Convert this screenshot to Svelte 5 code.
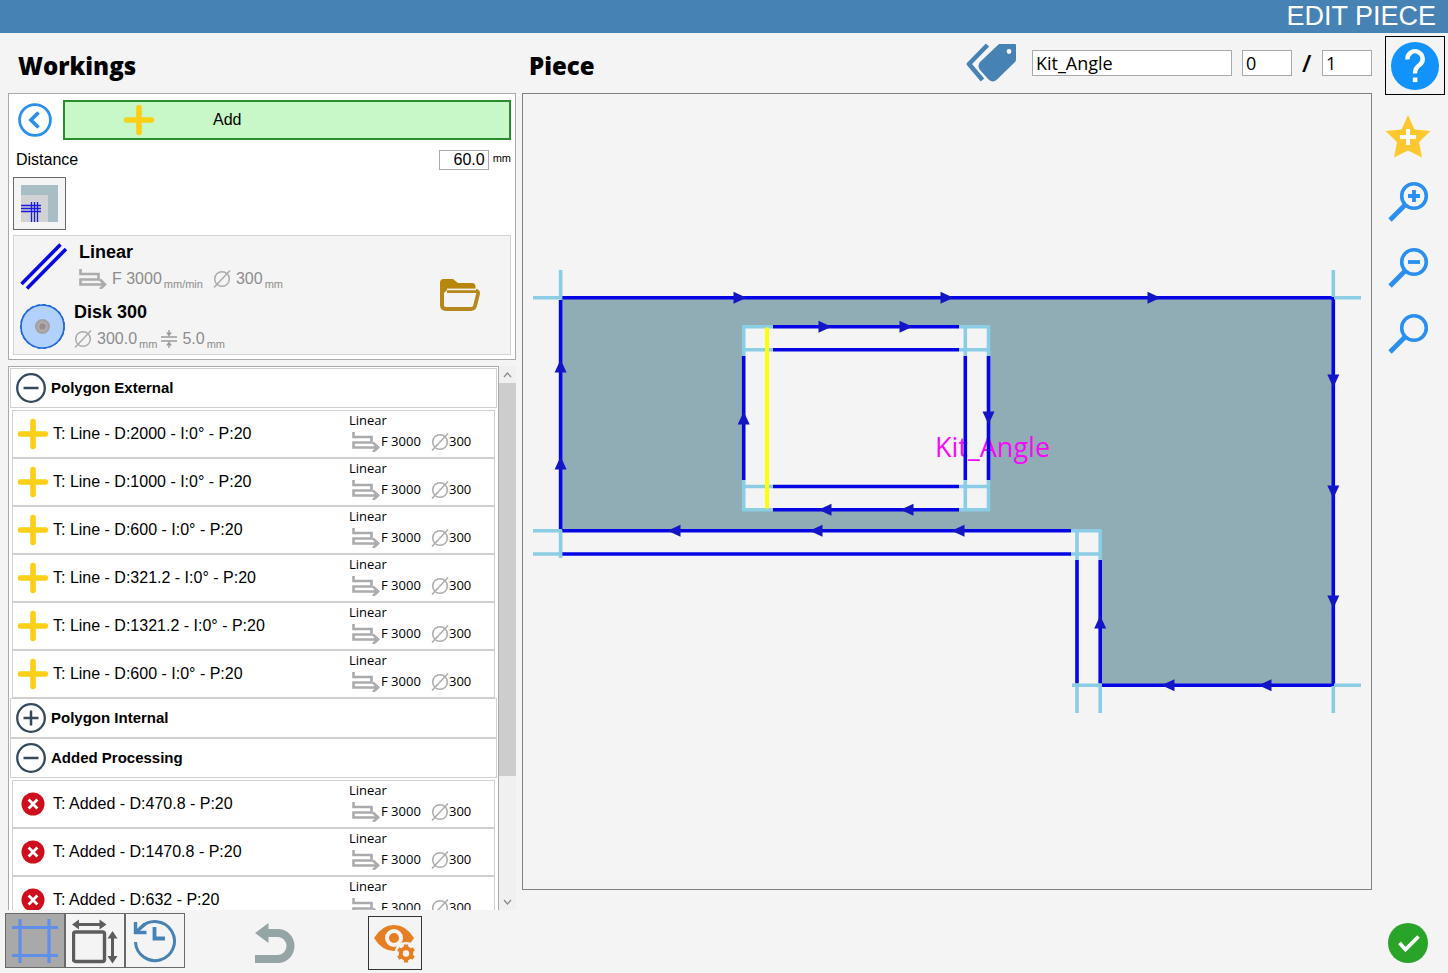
<script>
  let pieceName = $state("Kit_Angle");
  let pieceIndex = $state("0");
  let pieceTotal = $state("1");
  let distance = $state("60.0");
  let view = $state("cuts");

  let groups = $state([
    {
      title: "Polygon External",
      open: true,
      kind: "line",
      items: [
        "T: Line - D:2000 - I:0° - P:20",
        "T: Line - D:1000 - I:0° - P:20",
        "T: Line - D:600 - I:0° - P:20",
        "T: Line - D:321.2 - I:0° - P:20",
        "T: Line - D:1321.2 - I:0° - P:20",
        "T: Line - D:600 - I:0° - P:20",
      ],
    },
    { title: "Polygon Internal", open: false, kind: "line", items: [] },
    {
      title: "Added Processing",
      open: true,
      kind: "added",
      items: [
        "T: Added - D:470.8 - P:20",
        "T: Added - D:1470.8 - P:20",
        "T: Added - D:632 - P:20",
      ],
    },
  ]);

  // share of the list that fits in the viewport
  const thumbHeight = 77;

  // blade overrun past the corners
  const overruns = [
    "M533 297.7H562M560.6 270V299.5",
    "M1333.3 270V297M1334 297.7H1361",
    "M1333.3 686V713M1334 685.2H1361",
    "M533 530.8H561M533 554H561M560.6 530V558",
    "M1071 530.8H1101.5M1071 554H1101M1077 531V560M1100.2 530V560",
    "M1072 685.2H1102M1077 685V713M1100.2 685V713",
    "M742 326.7H773M743.7 326V356M743 349.7H773",
    "M742 509.7H773M743.7 480V511M743 486.5H773",
    "M959 326.7H990M988.5 326V356M965.3 327V356M959 349.7H989",
    "M959 509.7H990M988.5 480V511M965.3 480V510M959 486.5H989",
  ];

  const cuts = [
    "M562 297.7H1334",
    "M1333.3 298V685",
    "M1102 685.2H1334",
    "M560.6 300V529",
    "M562 530.8H1071M562 554H1071",
    "M1077 560V683.5M1100.2 560V683.5",
    "M773 326.7H959M773 349.7H959",
    "M773 486.5H959M773 509.7H959",
    "M743.7 356V480",
    "M965.3 356V480M988.5 356V480",
  ];

  const arrows = [
    { x: 740, y: 297.7, angle: 0 },
    { x: 947, y: 297.7, angle: 0 },
    { x: 1154, y: 297.7, angle: 0 },
    { x: 825, y: 326.7, angle: 0 },
    { x: 906, y: 326.7, angle: 0 },
    { x: 1333.3, y: 381, angle: 90 },
    { x: 1333.3, y: 492, angle: 90 },
    { x: 1333.3, y: 602, angle: 90 },
    { x: 988.5, y: 418, angle: 90 },
    { x: 1265, y: 685.2, angle: 180 },
    { x: 1168, y: 685.2, angle: 180 },
    { x: 958, y: 530.8, angle: 180 },
    { x: 816, y: 530.8, angle: 180 },
    { x: 674, y: 530.8, angle: 180 },
    { x: 907, y: 509.7, angle: 180 },
    { x: 825, y: 509.7, angle: 180 },
    { x: 560.6, y: 463, angle: 270 },
    { x: 560.6, y: 366, angle: 270 },
    { x: 743.7, y: 418, angle: 270 },
    { x: 1100.2, y: 622, angle: 270 },
  ];
</script>

{#snippet feedIcon()}
  <svg class="feed-icon" viewBox="0 0 28 20" aria-hidden="true">
    <path d="M1.5 0V5H19.5V10.5H1.5V15.5H26M21 10.5L26 15.5L21 20" fill="none" stroke="#ababab" stroke-width="2.6" />
  </svg>
{/snippet}

{#snippet diameterIcon()}
  <svg class="diameter-icon" viewBox="0 0 18 18" aria-hidden="true">
    <circle cx="9" cy="9" r="7.3" fill="none" stroke="#ababab" stroke-width="1.5" />
    <path d="M1 17.5L17 0.5" stroke="#ababab" stroke-width="1.5" />
  </svg>
{/snippet}

{#snippet plusIcon()}
  <svg class="plus-icon" viewBox="0 0 32 32" aria-hidden="true">
    <path d="M16 3.5V28.5M3.5 16H28.5" stroke="#fbd016" stroke-width="5.6" stroke-linecap="round" />
  </svg>
{/snippet}

<div class="page">
  <header class="titlebar">EDIT PIECE</header>

  <main class="workspace">
    <section class="workings">
      <h2 class="heading">Workings</h2>

      <div class="panel">
        <div class="add-row">
          <button type="button" class="plain" aria-label="Back">
            <svg width="34" height="34" viewBox="0 0 34 34">
              <circle cx="17" cy="17" r="15.4" fill="none" stroke="#2b8fef" stroke-width="2.8" />
              <path d="M20.5 9.5L13 17L20.5 24.5" fill="none" stroke="#2b8fef" stroke-width="3.8" />
            </svg>
          </button>
          <button type="button" class="add-button">
            {@render plusIcon()}
            <span>Add</span>
          </button>
        </div>

        <div class="distance-row">
          <label for="distance">Distance</label>
          <input id="distance" class="distance-input" type="text" bind:value={distance} />
          <span class="unit">mm</span>
        </div>

        <button type="button" class="corner-button" aria-label="Corner type">
          <svg width="37" height="37" viewBox="0 0 37 37">
            <rect width="37" height="37" fill="#a9bec4" />
            <rect y="10" width="27" height="27" fill="#d0d2d3" />
            <path d="M0 20.5H20M0 23.5H20M0 26.5H20M10.5 17V37M13.5 17V37M16.5 17V37" stroke="#1a1ae0" stroke-width="1.3" />
          </svg>
        </button>

        <div class="tool-card">
          <div class="tools">
            <div class="tool">
              <svg width="47" height="48" viewBox="0 0 47 48" aria-hidden="true">
                <path d="M1.5 41L40.5 1.5M7 45.5L46 6" stroke="#0808e6" stroke-width="3.6" />
              </svg>
              <div class="tool-info tool-info--wide">
                <strong>Linear</strong>
                <div class="params">
                  {@render feedIcon()}
                  <span class="value">F 3000</span><small>mm/min</small>
                  {@render diameterIcon()}
                  <span class="value">300</span><small>mm</small>
                </div>
              </div>
            </div>
            <div class="tool tool--disk">
              <svg width="46" height="46" viewBox="0 0 46 46" aria-hidden="true">
                <circle cx="22.5" cy="22.5" r="21.5" fill="#b3d1fd" stroke="#2069dc" stroke-width="1.6" />
                <circle cx="22.5" cy="22.5" r="21.9" fill="none" stroke="#2069dc" stroke-width="1.2" stroke-dasharray="4 2" />
                <circle cx="22.5" cy="22.5" r="6.3" fill="#b5aead" stroke="#a2a2a2" stroke-width="2.6" />
                <circle cx="22.5" cy="22.5" r="3.2" fill="#958f8f" />
              </svg>
              <div class="tool-info">
                <strong>Disk 300</strong>
                <div class="params">
                  {@render diameterIcon()}
                  <span class="value">300.0</span><small>mm</small>
                  <svg width="16" height="18" viewBox="0 0 16 18" aria-hidden="true">
                    <path d="M0 7H16M0 11H16M8 0V5M8 18V13" stroke="#999" stroke-width="1.3" />
                    <path d="M5 2.5H11L8 6.5ZM5 15.5H11L8 11.5Z" fill="#999" />
                  </svg>
                  <span class="value">5.0</span><small>mm</small>
                </div>
              </div>
            </div>
          </div>
          <button type="button" class="plain" aria-label="Open tool">
            <svg width="42" height="34" viewBox="0 0 42 34">
              <path d="M1 5Q1 1 4.5 1H14L19 5H33Q36.5 5 36.5 8.5V11H9L5 15V28H1Z" fill="#b8860b" />
              <path d="M3 8V27Q3 31 7 31H32Q35 31 36 28L39 16Q39.5 13 37 13H8" fill="none" stroke="#b5871c" stroke-width="3.8" stroke-linejoin="round" />
              <path d="M8 11.4H37" stroke="#f4f4f4" stroke-width="1.6" />
            </svg>
          </button>
        </div>
      </div>

      <div class="list-box">
        <div class="list">
          {#each groups as group (group.title)}
            <button type="button" class="group-head" aria-expanded={group.open} onclick={() => (group.open = !group.open)}>
              <svg width="30" height="30" viewBox="0 0 30 30" aria-hidden="true">
                <circle cx="15" cy="15" r="13.8" fill="none" stroke="#34495e" stroke-width="2.3" />
                <path d={group.open ? "M7.5 15H22.5" : "M7.5 15H22.5M15 7.5V22.5"} stroke="#34495e" stroke-width="2.5" />
              </svg>
              <span>{group.title}</span>
            </button>
            {#if group.open}
              <ul class="items">
                {#each group.items as item}
                  <li class="item">
                    {#if group.kind === "line"}
                      {@render plusIcon()}
                    {:else}
                      <svg class="plus-icon" viewBox="0 0 32 32" aria-hidden="true">
                        <circle cx="16" cy="16" r="11.5" fill="#d00d1c" />
                        <path d="M11.6 11.6L20.4 20.4M20.4 11.6L11.6 20.4" stroke="#fff" stroke-width="2.8" />
                      </svg>
                    {/if}
                    <span class="item-name">{item}</span>
                    <div class="item-tool">
                      <span>Linear</span>
                      <div class="item-params">
                        {@render feedIcon()}
                        <span class="item-feed">F 3000</span>
                        {@render diameterIcon()}
                        <span>300</span>
                      </div>
                    </div>
                  </li>
                {/each}
              </ul>
            {/if}
          {/each}
        </div>
        <div class="scrollbar">
          <button type="button" class="scroll-arrow" aria-label="Scroll up">
            <svg width="9" height="6" viewBox="0 0 9 6"><path d="M1 5L4.5 1L8 5" fill="none" stroke="#888" stroke-width="1.2" /></svg>
          </button>
          <div class="scroll-track">
            <div class="scroll-thumb" style="height: {thumbHeight}%"></div>
          </div>
          <button type="button" class="scroll-arrow" aria-label="Scroll down">
            <svg width="9" height="6" viewBox="0 0 9 6"><path d="M1 1L4.5 5L8 1" fill="none" stroke="#888" stroke-width="1.2" /></svg>
          </button>
        </div>
      </div>

      <footer class="toolbar">
        <div class="views">
          <button type="button" class="view" class:view--active={view === "cuts"} aria-label="Cuts" onclick={() => (view = "cuts")}>
            <svg width="46" height="46" viewBox="0 0 46 46">
              <path d="M0 9.5H46M0 37.5H46M8 1V45M37 1V45" stroke="#5f8fe8" stroke-width="3.2" />
            </svg>
          </button>
          <button type="button" class="view" class:view--active={view === "size"} aria-label="Size" onclick={() => (view = "size")}>
            <svg width="46" height="46" viewBox="0 0 46 46">
              <rect x="1.5" y="14" width="31" height="29.5" rx="2" fill="none" stroke="#5c5c5c" stroke-width="3.4" />
              <path d="M4 6.5H31M40.5 18V41" stroke="#5c5c5c" stroke-width="3" />
              <path d="M0 6.5L7 1.5V11.5ZM34.5 6.5L27.5 1.5V11.5ZM40.5 13L35.5 20.5H45.5ZM40.5 45.5L35.5 38H45.5Z" fill="#5c5c5c" />
            </svg>
          </button>
          <button type="button" class="view" class:view--active={view === "history"} aria-label="History" onclick={() => (view = "history")}>
            <svg width="46" height="46" viewBox="0 0 46 46">
              <path d="M3.5 24A19.5 19.5 0 1 0 9 9.5" fill="none" stroke="#4682b4" stroke-width="3" />
              <path d="M3.5 4V14.5H14.5" fill="none" stroke="#4682b4" stroke-width="3.4" />
              <path d="M4 14L13 6" stroke="#4682b4" stroke-width="3.4" />
              <path d="M22.5 9V20.5H33" fill="none" stroke="#4682b4" stroke-width="3.8" />
            </svg>
          </button>
        </div>
        <button type="button" class="plain" aria-label="Undo">
          <svg width="43" height="42" viewBox="0 0 43 42">
            <path d="M0 11L13.5 1V7H23A16.500 17 0 0 1 23 41H0V33H23A8.500 9 0 0 0 23 15H13.5V21Z" fill="#95a5a6" />
          </svg>
        </button>
        <button type="button" class="preview-button" aria-label="Preview settings">
          <svg width="42" height="40" viewBox="0 0 42 40">
            <path d="M0 15Q8 2 20 2T40 15Q37 20 34 22L22 28H20Q8 28 0 15Z" fill="#e67e22" />
            <circle cx="20" cy="15" r="7" fill="none" stroke="#f4f4f4" stroke-width="4" />
            <circle cx="32" cy="30.5" r="11.5" fill="#f4f4f4" />
            <circle cx="32" cy="30.5" r="5.2" fill="none" stroke="#e67e22" stroke-width="4" />
            <path
              d="M32 21.500V39.5M24.2 26L39.8 35M24.2 35L39.8 26"
              stroke="#e67e22"
              stroke-width="4.2"
            />
            <circle cx="32" cy="30.5" r="3.2" fill="#f4f4f4" />
          </svg>
        </button>
      </footer>
    </section>

    <section class="piece">
      <div class="piece-head">
        <h2 class="heading">Piece</h2>
        <div class="piece-fields">
          <svg width="52" height="42" viewBox="0 0 52 42" aria-hidden="true">
            <path d="M21.5 3L3 22L16.5 38" fill="none" stroke="#4682b4" stroke-width="4.6" stroke-linejoin="round" />
            <path d="M33 2H49Q50 2 50 3V17.5Q50 19 49 20L31 37.5Q27 41 23 38L14 28Q11 24 14 20Z" fill="#4682b4" />
            <circle cx="43" cy="9.5" r="2.4" fill="#fff" />
          </svg>
          <input class="name-input" type="text" aria-label="Piece name" bind:value={pieceName} />
          <input class="count-input" type="text" aria-label="Piece number" bind:value={pieceIndex} />
          <span class="slash">/</span>
          <input class="count-input" type="text" aria-label="Piece total" bind:value={pieceTotal} />
        </div>
      </div>

      <div class="canvas">
        <svg viewBox="523 94 848 795">
          <path
            d="M560.6 297.7H1333.3V685.2H1100.2V530.8H560.6ZM743.7 326.7V509.7H988.5V326.7Z"
            fill="#90acb5"
            fill-rule="evenodd"
          />
          <text class="piece-label" x="935" y="457">Kit_Angle</text>
          {#each cuts as d}
            <path {d} stroke="#0606e4" stroke-width="3.6" />
          {/each}
          {#each overruns as d}
            <path {d} stroke="#8acde5" stroke-width="3.6" />
          {/each}
          <path d="M767 327.5V508.5" stroke="#ffff00" stroke-width="4" />
          {#each arrows as arrow}
            <path d="M-6.5 -6V6L6.5 0Z" fill="#1515c8" transform="translate({arrow.x} {arrow.y}) rotate({arrow.angle})" />
          {/each}
        </svg>
      </div>
    </section>

    <aside class="sidebar">
      <button type="button" class="help-button" aria-label="Help">
        <svg width="48" height="48" viewBox="0 0 48 48">
          <circle cx="24" cy="24" r="24" fill="#1193fb" />
          <path d="M16.5 17.5A7.600 7.600 0 1 1 28.5 23Q24 26 24 31.5" fill="none" stroke="#fff" stroke-width="4.4" />
          <rect x="21.800" y="35.5" width="4.6" height="4.6" fill="#fff" />
        </svg>
      </button>
      <button type="button" class="plain" aria-label="Add to favourites">
        <svg width="46" height="46" viewBox="0 0 46 46">
          <path d="M23 0L29.5 14.5L45.5 16L34 27L37 42.5L23 35.5L9 42.5L12 27L0.5 16L16.5 14.5Z" fill="#fdc82f" />
          <path d="M23 14V30M15 22H31" stroke="#fff" stroke-width="4" />
        </svg>
      </button>
      {#each ["in", "out", "fit"] as mode}
        <button type="button" class="plain" aria-label="Zoom {mode}">
          <svg width="46" height="46" viewBox="0 0 46 46">
            <circle cx="29" cy="15" r="12.3" fill="none" stroke="#2b8fef" stroke-width="3.6" />
            <path d="M20 24L5 39" stroke="#2b8fef" stroke-width="4.8" />
            {#if mode !== "fit"}
              <path d={mode === "in" ? "M23 15H35M29 9V21" : "M23 15H35"} stroke="#2b8fef" stroke-width="3.8" />
            {/if}
          </svg>
        </button>
      {/each}
      <button type="button" class="plain confirm" aria-label="Confirm">
        <svg width="46" height="46" viewBox="0 0 46 46">
          <circle cx="23" cy="23" r="20" fill="#28a428" />
          <path d="M14.5 23L20.5 29.5L33.5 16.5" fill="none" stroke="#fff" stroke-width="3.8" />
        </svg>
      </button>
    </aside>
  </main>
</div>

<style>
  :global(body) {
    background: #f4f4f4;
  }

  .page {
    display: flex;
    flex-direction: column;
    height: 100vh;
    background: #f4f4f4;
    color: #000;
    font-family: "Liberation Sans", Arial, sans-serif;
    font-size: 16px;
    line-height: 20px;
  }

  .page * {
    box-sizing: border-box;
  }

  button {
    margin: 0;
    padding: 0;
    color: inherit;
    font: inherit;
    cursor: pointer;
  }

  svg {
    display: block;
    flex: none;
  }

  .plain {
    display: block;
    background: none;
    border: none;
  }

  .titlebar {
    flex: none;
    padding-right: 12px;
    background: #4682b4;
    color: #fff;
    font-size: 27px;
    line-height: 33px;
    text-align: right;
  }

  .workspace {
    flex: 1;
    min-height: 0;
    display: grid;
    grid-template-columns: 516px minmax(0, 1fr) 63px;
    grid-template-rows: minmax(0, 1fr);
  }

  .heading {
    height: 60px;
    margin: 0;
    padding-top: 3px;
    font-family: "Open Sans", "Noto Sans", sans-serif;
    font-size: 24px;
    font-weight: 800;
    line-height: 60px;
  }

  .workings {
    display: flex;
    flex-direction: column;
    min-height: 0;
  }

  .workings .heading {
    padding-left: 18px;
  }

  .panel {
    margin-left: 8px;
    padding: 6px 4px 4px;
    background: #fff;
    border: 1px solid #a9a9a9;
  }

  .add-row {
    display: flex;
    align-items: center;
    gap: 11px;
    padding-left: 5px;
  }

  .add-button {
    flex: 1;
    display: flex;
    align-items: center;
    gap: 58px;
    height: 40px;
    padding-left: 58px;
    background: #c8f7c8;
    border: 2px solid #2a8c2a;
  }

  .plus-icon {
    width: 32px;
    height: 32px;
  }

  .distance-row {
    display: flex;
    align-items: center;
    height: 37px;
    padding: 3px 0 0 3px;
  }

  .distance-input {
    width: 50px;
    height: 20px;
    margin: 0 4px 0 auto;
    padding: 0 3px;
    border: 1px solid #a9a9a9;
    font: inherit;
    text-align: right;
  }

  .unit {
    padding-bottom: 4px;
    font-size: 11px;
  }

  .corner-button {
    display: flex;
    align-items: center;
    justify-content: center;
    width: 53px;
    height: 53px;
    background: #f4f4f4;
    border: 1px solid #696969;
  }

  .tool-card {
    display: flex;
    align-items: center;
    justify-content: space-between;
    height: 120px;
    margin-top: 5px;
    padding: 0 29px 0 6px;
    background: #f4f4f4;
    border: 1px solid #d3d3d3;
  }

  .tool {
    display: flex;
    align-items: center;
    gap: 8px;
    height: 59px;
    padding-top: 2px;
  }

  .tool--disk {
    padding-top: 4px;
  }

  .tool-info--wide {
    padding-left: 4px;
  }

  .tool-info strong {
    display: block;
    font-size: 18px;
    line-height: 24px;
  }

  .params {
    display: flex;
    align-items: center;
    height: 30px;
    color: #8c8c8c;
  }

  .params small {
    align-self: flex-end;
    margin: 0 10px 0 2px;
    font-size: 11px;
  }

  .tool--disk small {
    margin-right: 4px;
  }

  .value {
    margin-left: 5px;
  }

  .feed-icon {
    width: 28px;
    height: 20px;
  }

  .diameter-icon {
    width: 18px;
    height: 18px;
  }

  .list-box {
    flex: 1;
    min-height: 0;
    display: flex;
    margin: 6px 0 0 8px;
  }

  .list {
    flex: 1;
    padding: 1px;
    background: #fff;
    border: 1px solid #a9a9a9;
    border-bottom: none;
    overflow: hidden;
  }

  .group-head {
    display: flex;
    align-items: center;
    gap: 5px;
    width: 100%;
    height: 40px;
    padding-left: 5px;
    background: #fff;
    border: 1px solid #d0d0d0;
    font-size: 15px;
    font-weight: bold;
  }

  .items {
    margin: 0;
    padding: 2px 2px 0;
    list-style: none;
  }

  .item {
    display: flex;
    align-items: center;
    height: 48px;
    padding-left: 4px;
    border: 1px solid #d0d0d0;
  }

  .item-name {
    flex: 1;
    padding-left: 4px;
  }

  .item-tool {
    width: 145px;
    padding-bottom: 6px;
    font-family: "Open Sans", "Noto Sans", sans-serif;
    font-size: 13px;
  }

  .item-params {
    display: flex;
    align-items: center;
    padding-left: 3px;
  }

  .item-params svg {
    margin-top: 2px;
  }

  .item-feed {
    width: 51px;
    padding-left: 1px;
  }

  .scrollbar {
    display: flex;
    flex-direction: column;
    width: 17px;
    background: #f0f0f0;
  }

  .scroll-arrow {
    display: flex;
    align-items: center;
    justify-content: center;
    height: 17px;
    background: none;
    border: none;
  }

  .scroll-track {
    flex: 1;
  }

  .scroll-thumb {
    background: #cdcdcd;
  }

  .toolbar {
    flex: none;
    display: flex;
    align-items: center;
    gap: 70px;
    height: 63px;
    padding: 3px 0 0 5px;
  }

  .views {
    display: flex;
    align-self: flex-start;
  }

  .view {
    display: flex;
    align-items: center;
    justify-content: center;
    width: 60px;
    height: 55px;
    background: #f4f4f4;
    border: 1px solid #696969;
  }

  .view--active {
    background: #a9a9a9;
  }

  .preview-button {
    display: flex;
    align-items: center;
    justify-content: center;
    width: 54px;
    height: 54px;
    background: #f4f4f4;
    border: 1px solid #333;
  }

  .piece {
    display: flex;
    flex-direction: column;
    min-height: 0;
    padding: 0 13px 83px 6px;
  }

  .piece-head {
    display: flex;
    justify-content: space-between;
    height: 60px;
    padding-left: 7px;
  }

  .piece-fields {
    display: flex;
    align-items: center;
    gap: 10px;
  }

  .piece-fields svg {
    margin-right: 4px;
  }

  .name-input,
  .count-input {
    height: 26px;
    padding: 0 3px;
    border: 1px solid #a9a9a9;
    font-family: "Open Sans", "Noto Sans", sans-serif;
    font-size: 18px;
  }

  .name-input {
    width: 200px;
  }

  .count-input {
    width: 50px;
  }

  .slash {
    width: 10px;
    font-family: "Open Sans", "Noto Sans", sans-serif;
    font-size: 24px;
    font-weight: 600;
  }

  .canvas {
    flex: 1;
    min-height: 0;
    border: 1px solid #808080;
  }

  .canvas svg {
    width: 100%;
    height: 100%;
  }

  .piece-label {
    fill: #f808f8;
    font-family: "Open Sans", "Noto Sans", sans-serif;
    font-size: 27px;
  }

  .sidebar {
    display: flex;
    flex-direction: column;
    align-items: flex-start;
    gap: 20px;
    padding: 3px 3px 7px 0;
  }

  .help-button {
    display: flex;
    align-items: center;
    justify-content: center;
    width: 60px;
    height: 59px;
    background: #f4f4f4;
    border: 1px solid #000;
  }

  .confirm {
    margin-top: auto;
  }
</style>
